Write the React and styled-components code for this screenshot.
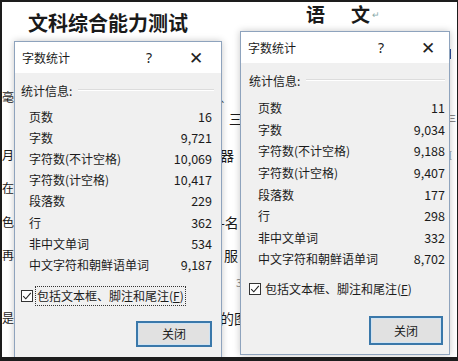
import React from 'react';
import styled, { createGlobalStyle } from 'styled-components';

const GlobalStyle = createGlobalStyle`
  html, body { margin: 0; padding: 0; background: #fff; }
  body { font-family: "Noto Sans CJK SC", "Noto Sans", sans-serif; }
`;

const Frame = styled.div`
  position: relative;
  width: 458px;
  height: 361px;
  box-sizing: border-box;
  border: solid #1d1d1d;
  border-width: 2px 1px 4px 2px;
  background: #fff;
  overflow: hidden;
`;

// the word document that lies under the two dialogs
const Doc = styled.div`
  display: grid;
  grid-template-columns: 12px 206px 22px 207px 8px;
  grid-template-rows: 40px 24px 20px 22px 20px 17px 20px 13px 20px 14px 20px 13px 20px 8px 18px 17px 20px 1fr;
  height: 100%;
  color: #1a1a1a;
`;

const Heading = styled.div`
  grid-row: 1;
  grid-column: 1 / -1;
  display: flex;
  align-items: flex-start;
  padding-left: 26px;
`;

const DocTitle = styled.span`
  margin-top: 11px;
  font-size: 20px;
  font-weight: 700;
  line-height: 1;
`;

const Subject = styled.span`
  display: flex;
  gap: 26px;
  margin: 2px 0 0 118px;
  font-size: 19px;
  font-weight: 700;
  line-height: 1;
`;

const Return = styled.span`
  margin: 8px 0 0 2px;
  font-size: 9px;
  line-height: 1;
  color: #8aa;
`;

const Cell = styled.span`
  grid-row: ${(p) => p.$row};
  grid-column: ${(p) => p.$col};
  justify-self: ${(p) => p.$justify || 'start'};
  align-self: center;
  font-size: ${(p) => p.$size || 14}px;
  color: ${(p) => p.$color || 'inherit'};
  line-height: 1;
  white-space: nowrap;
`;

const Rule = styled.span`
  grid-row: ${(p) => p.$row};
  grid-column: ${(p) => p.$col};
  justify-self: ${(p) => p.$justify || 'start'};
  align-self: center;
  width: ${(p) => p.$w}px;
  height: ${(p) => p.$h}px;
  background: ${(p) => p.$color};
`;

const Window = styled.div`
  position: absolute;
  left: ${(p) => p.$left}px;
  top: ${(p) => p.$top}px;
  width: ${(p) => p.$width}px;
  height: ${(p) => p.$height}px;
  box-sizing: border-box;
  border: 1px solid #8ea3bd;
  box-shadow: 0 0 7px rgba(0, 0, 0, 0.22);
  display: flex;
  flex-direction: column;
  background: #f0f0f0;
  color: #1b1b1b;
  font-size: 12px;
`;

const TitleBar = styled.div`
  height: 31px;
  flex-shrink: 0;
  background: #fff;
  display: flex;
  align-items: center;
  padding: 0 ${(p) => p.$padR}px 0 7px;
`;

const Title = styled.span`
  flex: 1;
  font-size: 12px;
`;

const CaptionButton = styled.span`
  width: 40px;
  display: flex;
  justify-content: center;
  align-items: center;
  margin-left: ${(p) => p.$gap || 0}px;
  font-size: ${(p) => p.$size}px;
  color: #222;
  font-family: "Noto Sans", sans-serif;
`;

const Body = styled.div`
  flex: 1;
  display: flex;
  flex-direction: column;
  padding: 8px ${(p) => p.$padR}px 0 ${(p) => p.$padL}px;
`;

const GroupHead = styled.div`
  display: flex;
  align-items: center;
  height: 18px;
  gap: 6px;
`;

const GroupRule = styled.span`
  flex: 1;
  height: 1px;
  background: #dcdcdc;
  border-bottom: 1px solid #fff;
`;

const Stats = styled.div`
  display: grid;
  grid-template-columns: 1fr auto;
  grid-auto-rows: ${(p) => p.$rowH}px;
  align-items: center;
  margin-top: ${(p) => p.$gap}px;
  padding: 0 ${(p) => p.$padR}px 0 ${(p) => p.$padL}px;
`;

const Label = styled.span`
  white-space: nowrap;
`;

const Value = styled.span`
  text-align: right;
  font-size: 12.5px;
`;

const CheckRow = styled.label`
  display: flex;
  align-items: center;
  height: 20px;
  margin-top: ${(p) => p.$gap}px;
  gap: 3px;
`;

const Box = styled.span`
  width: 12px;
  height: 12px;
  box-sizing: border-box;
  border: 1px solid #333;
  background: #fff;
  display: flex;
  align-items: center;
  justify-content: center;
`;

const CheckText = styled.span`
  padding: 0 1px;
  line-height: 18px;
  outline: ${(p) => (p.$focused ? '1px dotted #333' : 'none')};
  font-size: 12px;
  u { text-decoration: underline; }
`;

const Footer = styled.div`
  display: flex;
  justify-content: flex-end;
  margin-top: ${(p) => p.$gap}px;
  padding-right: ${(p) => p.$padR}px;
`;

const Button = styled.button`
  width: ${(p) => p.$w}px;
  height: ${(p) => p.$h}px;
  box-sizing: border-box;
  border: 2px solid #3a78aa;
  box-shadow: inset 0 0 0 1px #cfe3f3;
  background: #e1e1e1;
  font-family: "Noto Sans CJK SC", sans-serif;
  font-size: 12px;
  color: #1b1b1b;
  padding: 0;
`;

const Check = () => (
  <svg width="10" height="10" viewBox="0 0 10 10">
    <path d="M1.2 5.2 L3.8 7.8 L8.8 1.8" fill="none" stroke="#222" strokeWidth="1.1" />
  </svg>
);

const WordCount = ({ data, layout }) => (
  <Window $left={layout.left} $top={layout.top} $width={layout.width} $height={layout.height}>
    <TitleBar $padR={layout.capPad}>
      <Title>字数统计</Title>
      <CaptionButton $size={14}>?</CaptionButton>
      <CaptionButton $size={17} $gap={7}>✕</CaptionButton>
    </TitleBar>
    <Body $padL={layout.padL} $padR={layout.padR}>
      <GroupHead>
        <span>统计信息:</span>
        <GroupRule />
      </GroupHead>
      <Stats $rowH={layout.rowH} $gap={layout.statsGap} $padL={layout.statsL} $padR={layout.statsR}>
        {data.map(([k, v]) => (
          <React.Fragment key={k}>
            <Label>{k}</Label>
            <Value>{v}</Value>
          </React.Fragment>
        ))}
      </Stats>
      <CheckRow $gap={layout.checkGap}>
        <Box><Check /></Box>
        <CheckText $focused={layout.focused}>
          包括文本框、脚注和尾注(<u>F</u>)
        </CheckText>
      </CheckRow>
      <Footer $gap={layout.btnGap} $padR={layout.btnR}>
        <Button $w={layout.btnW} $h={layout.btnH}>关闭</Button>
      </Footer>
    </Body>
  </Window>
);

const leftData = [
  ['页数', '16'],
  ['字数', '9,721'],
  ['字符数(不计空格)', '10,069'],
  ['字符数(计空格)', '10,417'],
  ['段落数', '229'],
  ['行', '362'],
  ['非中文单词', '534'],
  ['中文字符和朝鲜语单词', '9,187'],
];

const rightData = [
  ['页数', '11'],
  ['字数', '9,034'],
  ['字符数(不计空格)', '9,188'],
  ['字符数(计空格)', '9,407'],
  ['段落数', '177'],
  ['行', '298'],
  ['非中文单词', '332'],
  ['中文字符和朝鲜语单词', '8,702'],
];

const leftLayout = {
  left: 12, top: 39, width: 208, height: 320, capPad: 5,
  padL: 6, padR: 7, rowH: 21.1, statsGap: 7, statsL: 8, statsR: 2,
  checkGap: 11, focused: true, btnGap: 15, btnR: 2, btnW: 76, btnH: 26,
};

const rightLayout = {
  left: 238, top: 29, width: 210, height: 324, capPad: 1,
  padL: 8, padR: 4, rowH: 21.6, statsGap: 8, statsL: 9, statsR: 0,
  checkGap: 9, focused: false, btnGap: 17, btnR: 2, btnW: 74, btnH: 29,
};

// scraps of the document visible around the dialogs: [row, column, text, size, color, justify]
const scraps = [
  [4, 1, '毫', 12], [7, 1, '月', 12], [9, 1, '在', 12],
  [11, 1, '色', 12], [13, 1, '再', 12], [17, 1, '是', 12],
  [4, 3, '、', 11, '#444'], [5, 3, '三', 13, null, 'end'], [7, 3, '器'],
  [11, 3, '-名'], [13, 3, '服', 14, null, 'center'],
  [15, 3, '3', 11, '#888', 'end'], [17, 3, '的图'],
  [5, 5, '三', 7], [7, 5, '[', 8, '#555'],
];

export default function App() {
  return (
    <>
      <GlobalStyle />
      <Frame>
        <Doc>
          <Heading>
            <DocTitle>文科综合能力测试</DocTitle>
            <Subject>
              <span>语</span>
              <span>文</span>
            </Subject>
            <Return>↵</Return>
          </Heading>
          <Rule $row={2} $col={3} $justify="end" $w={2} $h={11} $color="#2b4c98" />
          <Rule $row={7} $col={3} $justify="end" $w={1} $h={14} $color="#333" />
          <Rule $row={2} $col={5} $w={2} $h={10} $color="#2b4c98" />
          {scraps.map(([row, col, text, size, color, justify]) => (
            <Cell key={`${row}-${col}`} $row={row} $col={col} $size={size} $color={color} $justify={justify}>
              {text}
            </Cell>
          ))}
        </Doc>

        <WordCount data={leftData} layout={leftLayout} />
        <WordCount data={rightData} layout={rightLayout} />
      </Frame>
    </>
  );
}
